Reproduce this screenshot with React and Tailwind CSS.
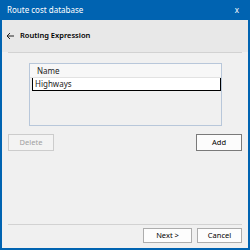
export default function App() {
  return (
    <div
      className="w-[250px] h-[250px] flex flex-col bg-[#f0f0f0] border-x-2 border-b-2 border-[#0063b1] overflow-hidden"
      style={{ fontFamily: '"Noto Sans", "Open Sans", sans-serif' }}
    >
      <div className="h-[20px] shrink-0 -mx-[2px] bg-[#0063b1] text-white text-[8px] flex items-center justify-between pl-[7px] pr-[11px]">
        <span>Route cost database</span>
        <span className="text-[8px]">x</span>
      </div>

      <div className="h-[32px] shrink-0 bg-[#e8e8e8] flex items-center pl-[4px] text-black">
        <svg width="14" height="8" viewBox="0 0 14 8" className="shrink-0">
          <path d="M1 4 H8 M4 1 L1 4 L4 7" stroke="#222" strokeWidth="1" fill="none" />
        </svg>
        <span className="font-semibold text-[7.5px]">Routing Expression</span>
      </div>
      <div className="mx-[6px] h-px shrink-0 bg-[#d2d2d2]" />

      <div className="flex-1 flex flex-col px-[6px]">
        <div className="mt-[10px] ml-[21px] mr-[20px] h-[63px] border border-[#b8c7da] flex flex-col">
          <div className="h-[14px] bg-[#f7f7f7] border-b border-[#e2e2e2] text-[8px] text-[#222] leading-[13px] pl-[7px]">
            Name
          </div>
          <div className="ml-[2px] h-[13px] bg-white border-l border-[#c8c8c8] border-r border-b border-black text-[8px] text-[#222] leading-[12px] pl-[2px]">
            Highways
          </div>
        </div>

        <div className="mt-[8px] flex justify-between">
          <button className="w-[46px] h-[17px] border border-[#cccccc] bg-[#f3f3f3] text-[7.5px] text-[#a0a0a0]">
            Delete
          </button>
          <button className="w-[46px] h-[17px] border border-[#7a7a7a] bg-[#fcfcfc] text-[7.5px] text-black">
            Add
          </button>
        </div>
      </div>

      <div className="mx-[6px] h-px shrink-0 bg-[#d2d2d2]" />
      <div className="h-[23px] shrink-0 flex justify-end gap-[5px] pt-[3px] pr-[6px]">
        <button className="w-[49px] h-[15px] border border-[#adadad] bg-[#fdfdfd] text-[7.5px] text-black leading-none">
          Next &gt;
        </button>
        <button className="w-[45px] h-[15px] border border-[#adadad] bg-[#fdfdfd] text-[7.5px] text-black leading-none">
          Cancel
        </button>
      </div>
    </div>
  )
}
